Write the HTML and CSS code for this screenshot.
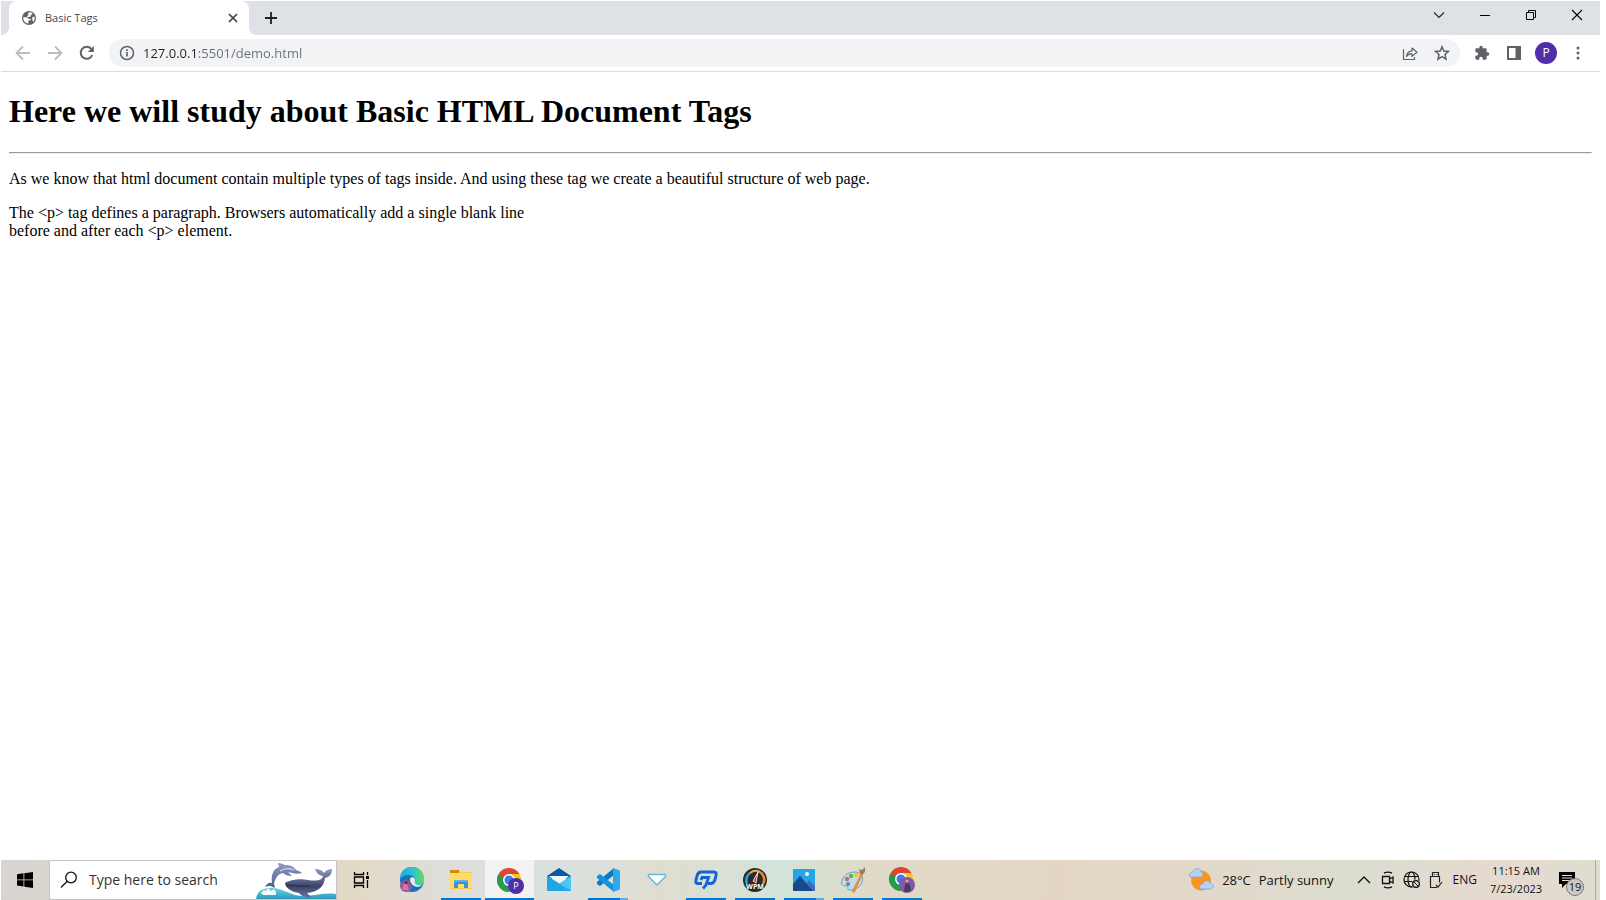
FILE: index.html
```html
<!DOCTYPE html>
<html lang="en">
<head>
<meta charset="utf-8">
<title>Basic Tags</title>
<link rel="stylesheet" href="styles.css">
</head>
<body>
<div class="desktop">
  <header class="tabstrip">
    <div class="tab">
      <svg class="favicon" width="14" height="14" viewBox="0 0 14 14"><circle cx="7" cy="7" r="7" fill="#5f6368"/><path d="M1.200 6.300L4.500 6.300C6 6.300 6 8 7.500 8h1.300v1.300H7.200c-.6 0-.8.300-.8 1v2.200C3.500 12.500 1 9.800 1.200 6.300zM7 1.300c1.500-.1 2.800.4 3.700 1.200-.3.900-1 1.300-2 1.300v1.300c0 .6-.5.900-1.200.9H5.200V4.700h1V3c0-.9.200-1.400.8-1.700zM10.300 6l2.400-.3c.3 1.900-.3 3.800-1.500 5L10.300 9z" fill="#fff"/></svg>
      <span class="tab-title">Basic Tags</span>
      <button class="tab-close" aria-label="Close tab"><svg width="10" height="10" viewBox="0 0 10 10"><path d="M1 1l8 8M9 1l-8 8" stroke="#3c4043" stroke-width="1.7"/></svg></button>
    </div>
    <button class="new-tab" aria-label="New tab"><svg width="14" height="14" viewBox="0 0 14 14"><path d="M7 1v12M1 7h12" stroke="#202124" stroke-width="1.8"/></svg></button>
    <div class="window-controls">
      <button aria-label="Search tabs"><svg width="12" height="12" viewBox="0 0 12 12"><path d="M1 3.500l5 5 5-5" fill="none" stroke="#222" stroke-width="1.100"/></svg></button>
      <button aria-label="Minimize"><svg width="12" height="12" viewBox="0 0 12 12"><path d="M1 6.500h10" stroke="#000"/></svg></button>
      <button aria-label="Restore"><svg width="12" height="12" viewBox="0 0 12 12"><path d="M1.500 3.500h7v7h-7zM3.500 3.500v-2h7v7h-2" fill="none" stroke="#000"/></svg></button>
      <button aria-label="Close"><svg width="12" height="12" viewBox="0 0 12 12"><path d="M1 1l10 10M11 1L1 11" stroke="#000" stroke-width="1.100"/></svg></button>
    </div>
  </header>

  <nav class="toolbar">
    <button class="nav-button" aria-label="Back"><svg width="16" height="16" viewBox="0 0 16 16"><path d="M15 8H2M8 1.500L1.500 8 8 14.500" fill="none" stroke="#babcbe" stroke-width="1.800"/></svg></button>
    <button class="nav-button" aria-label="Forward"><svg width="16" height="16" viewBox="0 0 16 16"><path d="M1 8h13M8 1.500L14.500 8 8 14.500" fill="none" stroke="#babcbe" stroke-width="1.800"/></svg></button>
    <button class="nav-button" aria-label="Reload"><svg width="16" height="16" viewBox="0 0 16 16"><path d="M13.300 10A6 6 0 1 1 12.300 3.900" fill="none" stroke="#5f6368" stroke-width="2"/><path d="M14.800 1v6h-6z" fill="#5f6368"/></svg></button>
    <div class="omnibox">
      <button aria-label="Site information"><svg width="16" height="16" viewBox="0 0 16 16"><circle cx="8" cy="8" r="6.500" fill="none" stroke="#5f6368" stroke-width="1.500"/><path d="M8 7v4.500M8 4.200v1.700" stroke="#5f6368" stroke-width="1.700"/></svg></button>
      <input class="address" type="text" aria-label="Address" value="127.0.0.1:5501/demo.html" spellcheck="false">
      <button aria-label="Share"><svg width="18" height="16" viewBox="0 0 18 16"><path d="M2.500 4v10.500h11V12M5.500 11.500c.4-3.500 2.200-5.500 5.500-5.700V3l5 4.200-5 4.200V8.700c-2.700 0-4.200.8-5.500 2.800z" fill="none" stroke="#5f6368" stroke-width="1.200" stroke-linejoin="round"/></svg></button>
      <button aria-label="Bookmark this tab"><svg width="16" height="16" viewBox="0 0 16 16"><path d="M8 1.800l1.800 4.200 4.700.4-3.500 3.100 1 4.600L8 11.700l-4 2.400 1-4.600L1.500 6.400 6.200 6z" fill="none" stroke="#5f6368" stroke-width="1.500"/></svg></button>
    </div>
    <button class="nav-button" aria-label="Extensions"><svg width="16" height="16" viewBox="0 0 24 24"><path d="M20.500 11H19V7a2 2 0 0 0-2-2h-4V3.500a2.500 2.500 0 0 0-5 0V5H4a2 2 0 0 0-2 2v3.800h1.500a2.700 2.700 0 0 1 0 5.400H2V20a2 2 0 0 0 2 2h3.800v-1.500a2.700 2.700 0 0 1 5.400 0V22H17a2 2 0 0 0 2-2v-4h1.500a2.500 2.500 0 0 0 0-5z" fill="#5f6368"/></svg></button>
    <button class="nav-button" aria-label="Side panel"><svg width="14" height="14" viewBox="0 0 14 14"><path d="M0 0h14v14H0zM2 2v10h6.500V2z" fill="#5f6368" fill-rule="evenodd"/></svg></button>
    <button class="nav-button" aria-label="Profile"><span class="avatar">P</span></button>
    <button class="nav-button" aria-label="Menu"><svg width="4" height="14" viewBox="0 0 4 14"><g fill="#5f6368"><circle cx="2" cy="2" r="1.500"/><circle cx="2" cy="7" r="1.500"/><circle cx="2" cy="12" r="1.500"/></g></svg></button>
  </nav>

  <main class="page">
    <h1>Here we will study about Basic HTML Document Tags</h1>
    <hr>
    <p>As we know that html document contain multiple types of tags inside. And using these tag we create a beautiful structure of web page.</p>
    <p>The &lt;p&gt; tag defines a paragraph. Browsers automatically add a single blank line<br>before and after each &lt;p&gt; element.</p>
  </main>

  <footer class="taskbar">
    <button class="start" aria-label="Start"><svg width="16" height="16" viewBox="0 0 16 16"><path d="M0 2.200l6.500-.9v6.200H0zM7.300 1.200L16 0v7.500H7.300zM0 8.300h6.500v6.200L0 13.600zM7.300 8.300H16V16l-8.700-1.300z"/></svg></button>
    <div class="search">
      <svg width="18" height="18" viewBox="0 0 18 18"><circle cx="11" cy="6.500" r="5.300" fill="none" stroke="#111" stroke-width="1.300"/><path d="M7.200 10.300L1 16.500" stroke="#111" stroke-width="1.300"/></svg>
      <input class="search-input" type="text" aria-label="Search" placeholder="Type here to search">
      <svg class="dolphins" width="80" height="36" viewBox="0 0 80 36">
        <defs>
          <linearGradient id="skin" x1="0" y1="0" x2="0" y2="1"><stop offset="0" stop-color="#8d9cc6"/><stop offset="1" stop-color="#545a86"/></linearGradient>
          <linearGradient id="whale" x1="0" y1="0" x2="0" y2="1"><stop offset="0" stop-color="#8d9bc2"/><stop offset=".6" stop-color="#3e4469"/><stop offset="1" stop-color="#6876a4"/></linearGradient>
          <linearGradient id="sea" x1="0" y1="0" x2="0" y2="1"><stop offset="0" stop-color="#70d1dc"/><stop offset="1" stop-color="#289bbd"/></linearGradient>
        </defs>
        <path d="M0 36c1-7 5-10 12-11 10-1 17 4 27 7 14 3 26-3 41-1v5z" fill="url(#sea)"/>
        <path d="M9 24c2-4 4-5 7-4-1-8 1-14 7-16L22 0c3 0 5 1 7 2 6 0 9 2 11 5 3 1 5 2 6 3-3 1-7 1-10 0l-4-1 4 4c-4 0-7-1-9-3-5 1-8 5-9 11 1 2 1 3 0 4-3-3-6-2-9-1z" fill="url(#skin)"/>
        <path d="M24 8c4-3 9-3 14-1" fill="none" stroke="#ccd5e8" stroke-width="1.200"/>
        <path d="M29 20c4-3 15-5 23-3 8 1 14 1 15-4-5-1-7-4-8-7 4 0 7 1 9 4 2-3 5-4 8-4 0 6-3 8-7 9-1 10-9 14-18 15l5 5c-6 0-11-2-13-5-7-1-14-5-14-10z" fill="url(#whale)"/>
        <path d="M30 22c8 0 14 2 24 1" fill="none" stroke="#242943"/>
        <path d="M5 30l3-3 2 1 2-3 3 3 3-2 2 3v3H7z" fill="#effcff"/>
      </svg>
    </div>
    <div class="apps">
      <button class="app task-view" aria-label="Task View"><svg width="17" height="16" viewBox="0 0 17 16"><path d="M1.500 0v2.500h9V0M1.500 5h9v6h-9zM1.500 16v-2.500h9V16M14.500 0v16" fill="none" stroke="#000" stroke-width="1.300"/><path d="M12 3h5v5h-5z" fill="#dfd6c3"/><path d="M13 4h3v3h-3z"/></svg></button>
      <button class="app" aria-label="Edge"><svg width="26" height="26" viewBox="0 0 26 26"><defs><linearGradient id="wave"><stop stop-color="#20a8e0"/><stop offset=".55" stop-color="#2dc5cf"/><stop offset="1" stop-color="#68da55"/></linearGradient></defs><circle cx="13" cy="13" r="12" fill="#1673bb"/><path d="M1 12A12 12 0 0 1 25 11c1 5-2 8-6 8-5 0-4-3-3-5C17 7 5 6 1 12z" fill="url(#wave)"/><path d="M11 12c1-3 5-2 5 1-1 4 1 6 7 5-4 4-12 1-12-6z" fill="#e6eeee"/><circle cx="7" cy="19" r="6" fill="#8e589a"/><path d="M3 23c1-8 4-8 5-6l2 6" fill="#db719d"/><circle cx="7" cy="15.500" r="1.500" fill="#463467"/></svg></button>
      <button class="app running" aria-label="File Explorer"><svg width="24" height="24" viewBox="0 0 24 24"><path d="M1 4V2h9l2 2h11v17H1z" fill="#ffc83a"/><path d="M1 5V2h9v3z" fill="#d58b00"/><path d="M1 5h22v15H1z" fill="#ffdb69"/><path d="M5 12h14v8h-4v-4H9v4H5z" fill="#3595db"/><path d="M5 12h14v2H5z" fill="#6aaedb"/></svg></button>
      <button class="app running active" aria-label="Chrome"><svg width="26" height="26" viewBox="0 0 26 26"><circle cx="12" cy="13" r="12" fill="#fbc519"/><path d="M12 13L1.600 7A12 12 0 0 0 12 25l5-9z" fill="#259b4b"/><path d="M1.600 7A12 12 0 0 1 22.400 7H12L8 12z" fill="#df443a"/><circle cx="12" cy="13" r="6" fill="#fff"/><circle cx="12" cy="13" r="4.500" fill="#3a7eeb"/></svg><span class="badge">P</span></button>
      <button class="app" aria-label="Mail"><svg width="24" height="24" viewBox="0 0 24 24"><path d="M0 8l12-8 12 8v3H0z" fill="#075aa5"/><path d="M2 8h20l-10 9z" fill="#f3f5f7"/><path d="M0 8l24 15H0z" fill="#20b0e8"/><path d="M24 8v15H4l9-8z" fill="#4bc8f2"/><path d="M0 8l24 15H0z" fill="#1fa6e6"/></svg></button>
      <button class="app running grouped" aria-label="Visual Studio Code"><svg width="24" height="24" viewBox="0 0 24 24"><path d="M18 0v7L4 18l-3-2v-2z" fill="#087ac3"/><path d="M18 24v-7L4 6 1 8v2z" fill="#1592dc"/><path d="M17 0l7 2.500v19L17 24z" fill="#30a8ee"/></svg></button>
      <button class="app" aria-label="Downloads"><svg width="20" height="14" viewBox="0 0 20 14"><path d="M1.500 1.500h17v2L10 12 1.500 3.500z" fill="#fff" stroke="#62b9db" stroke-width="1.500" stroke-linejoin="round"/></svg></button>
      <button class="app running" aria-label="PaintJet"><svg width="24" height="20" viewBox="0 0 24 20"><path d="M8 13.500H4c-2 0-2.500-1-2-3.500l1-4c.7-3 2-4 4-4h13c2 0 2.500 1 2 3.500l-1 4c-.7 3-2 4-4 4h-3" fill="none" stroke="#1264d4" stroke-width="3"/><path d="M7 10l1-2.500h6.500L12 15l-3 3.500" fill="none" stroke="#1264d4" stroke-width="2.800"/></svg></button>
      <button class="app running" aria-label="WPM"><svg width="26" height="26" viewBox="0 0 26 26"><circle cx="13" cy="13" r="12" fill="#292a2c"/><path d="M5 17A9 9 0 0 1 8 6" fill="none" stroke="#24a7e5" stroke-width="2.500"/><path d="M8 6a9 9 0 0 1 10-1" fill="none" stroke="#e8b04a" stroke-width="2"/><path d="M18 5a9 9 0 0 1 3 12" fill="none" stroke="#f18725" stroke-width="2.500"/><path d="M16 5l-2 11-3-2z" fill="#f23831" stroke="#fff" stroke-width=".8"/><text x="13" y="22" class="wpm" text-anchor="middle">WPM</text></svg></button>
      <button class="app running grouped" aria-label="Photos"><svg width="22" height="22" viewBox="0 0 22 22"><path d="M0 0h22v22H0z" fill="#24a5e8"/><path d="M10 19l6-8 6 6v5H10z" fill="#4967bd"/><path d="M0 15l7-8 13 15H0z" fill="#174a89"/><circle cx="14" cy="5" r="2" fill="#fff"/></svg></button>
      <button class="app running" aria-label="Paint"><svg width="26" height="26" viewBox="0 0 26 26"><path d="M2 14C3 8 9 5 15 5c6 0 9 5 7 10-1 5-7 8-13 8-2 0 0-4-3-4-4 0-5-2-4-5z" fill="#c1ddec" stroke="#6ba1bd"/><circle cx="7" cy="12" r="2.200" fill="#e66045"/><circle cx="11" cy="9" r="2.200" fill="#5db757"/><circle cx="16" cy="8" r="2.200" fill="#efc633"/><circle cx="8" cy="17" r="2" fill="#5487c5"/><path d="M21 6l2 1-8 18-3 1 1-4z" fill="#e98b32"/><path d="M20 6l-1-4 3 1 3-3v5l-3 3z" fill="#a47654"/></svg></button>
      <button class="app running" aria-label="Chrome, second profile"><svg width="28" height="28" viewBox="0 0 28 28"><circle cx="13" cy="13" r="12" fill="#fbc519"/><path d="M2.600 7A12 12 0 0 0 13 25l5-9-5-3z" fill="#259b4b"/><path d="M2.600 7A12 12 0 0 1 23.400 7H13L9 12z" fill="#df443a"/><circle cx="13" cy="13" r="6" fill="#fff"/><circle cx="13" cy="13" r="4.500" fill="#3a7eeb"/><circle cx="19" cy="19" r="8" fill="#83589f"/><path d="M16 26l1-7 2-3 3 3 1 6" fill="#4a3a6b"/><circle cx="19" cy="15" r="1.500" fill="#e5a5a8"/></svg></button>
    </div>
    <div class="tray">
      <button class="weather"><svg width="26" height="24" viewBox="0 0 26 24"><circle cx="13" cy="12.500" r="10" fill="#f9941f"/><path d="M2 9C0 6 3 4 5 4c1-5 8-4 8 0 3 1 2 5 0 5zM13 21c-3-2-1-5 2-5 0-4 6-4 7-1 4 0 4 6 1 6z" fill="#b7d0f4" stroke="#7da8df" stroke-width=".8"/></svg><span>28°C</span><span>Partly sunny</span></button>
      <button class="tray-icon" aria-label="Show hidden icons"><svg width="14" height="14" viewBox="0 0 14 14"><path d="M1 10l6-6 6 6" fill="none" stroke="#111" stroke-width="1.400"/></svg></button>
      <button class="tray-icon" aria-label="Meet Now"><svg width="14" height="18" viewBox="0 0 14 18"><path d="M3 2.200q4-2 8 0M3 15.800q4 2 8 0M1.500 5.500h7v7h-7zM8.500 8l3.500-2v6l-3.500-2" fill="none" stroke="#111" stroke-width="1.300"/></svg></button>
      <button class="tray-icon" aria-label="Network"><svg width="18" height="18" viewBox="0 0 18 18"><g fill="none" stroke="#111" stroke-width="1.200"><circle cx="8.500" cy="8.500" r="7.500"/><ellipse cx="8.500" cy="8.500" rx="3.500" ry="7.500"/><path d="M2 5.500h13M1 10.500h10"/></g><circle cx="13" cy="13" r="4.500" fill="#dcd8cc"/><circle cx="13" cy="13" r="3.300" fill="none" stroke="#111" stroke-width="1.300"/><path d="M10.800 10.800l4.400 4.400" stroke="#111"/></svg></button>
      <button class="tray-icon" aria-label="Safely remove hardware"><svg width="14" height="18" viewBox="0 0 14 18"><path d="M3.500 5.500v-4h6v4M8 16.500H1.500v-11h9v6M5 3.500h1M7.500 3.500h1M7 14l2 2 4-5" fill="none" stroke="#222" stroke-width="1.200"/></svg></button>
      <button class="language">ENG</button>
      <button class="clock"><span>11:15 AM</span><span>7/23/2023</span></button>
      <button class="notifications" aria-label="Notifications"><svg width="16" height="16" viewBox="0 0 16 16"><path d="M0 0h16v12H7l-4 4v-4H0z"/><path d="M3 3.500h10M3 6h10M3 8.500h8" stroke="#e6dbcf"/></svg><span class="count">19</span></button>
      <button class="show-desktop" aria-label="Show desktop"></button>
    </div>
  </footer>
</div>
</body>
</html>
```

FILE: styles.css
```css
* { box-sizing: border-box; }
body { margin: 0; background: #fff; font-family: "Open Sans", "Noto Sans", sans-serif; }
button { border: 0; padding: 0; margin: 0; background: none; font: inherit; color: inherit; display: flex; align-items: center; justify-content: center; }
input { border: 0; padding: 0; margin: 0; background: none; font: inherit; outline: 0; min-width: 0; }
svg { display: block; flex: none; }
.desktop { min-height: 100vh; padding: 1px 6px 0 1px; display: flex; flex-direction: column; }

.tabstrip { height: 34px; background: #dee1e6; display: flex; align-items: center; padding-left: 8px; }
.tab { position: relative; width: 240px; height: 34px; background: #fff; border-radius: 8px 8px 0 0; display: flex; align-items: center; padding: 0 11px 0 13px; }
.tab::before, .tab::after { content: ""; position: absolute; bottom: 0; width: 8px; height: 8px; }
.tab::before { left: -8px; background: radial-gradient(circle at 0 0, transparent 8px, #fff 8px); }
.tab::after { right: -8px; background: radial-gradient(circle at 100% 0, transparent 8px, #fff 8px); }
.tab-title { flex: 1; margin-left: 9px; font-size: 11px; line-height: 16px; color: #45494d; }
.new-tab { width: 28px; height: 28px; margin-left: 8px; }
.window-controls { margin-left: auto; display: flex; align-self: flex-start; }
.window-controls button { width: 46px; height: 28px; }

.toolbar { height: 37px; border-bottom: 1px solid #dadce0; display: flex; align-items: center; padding: 0 6px; }
.nav-button { width: 32px; height: 28px; flex: none; }
.omnibox { flex: 1; height: 28px; margin: 0 6px; padding: 0 10px; background: #f1f3f4; border-radius: 14px; display: flex; align-items: center; gap: 15px; }
.address { flex: 1; height: 20px; margin-left: -7px; font-size: 13px; line-height: 20px; color: #5f6368; background: linear-gradient(90deg, #202124 55px, #6b6f73 55px); -webkit-background-clip: text; background-clip: text; -webkit-text-fill-color: transparent; }
.avatar { width: 22px; height: 22px; border-radius: 50%; background: #512da8; color: #fff; font-size: 12px; line-height: 22px; text-align: center; }

.page { flex: 1; padding: 0 8px; font-family: "Liberation Serif", "Times New Roman", serif; font-size: 16px; color: #000; }
.page h1 { margin: 21px 0 22px; font-size: 32px; line-height: 37px; }
.page hr { margin: 8px 0; }
.page p { margin: 16px 0; line-height: 18px; }

.taskbar { height: 40px; display: flex; background: linear-gradient(90deg, #d9d4d0 0, #e2dac5 22%, #dedddb 28%, #d9e1df 35%, #e0ddd0 41%, #d2e3d9 49%, #e0dac8 54%, #e3d7c4 66%, #e3d8c8 74%, #dcddd1 84%, #e6dacf 94%, #dfddd0 100%); color: #111; }
.start { width: 48px; flex: none; }
.search { width: 288px; flex: none; display: flex; align-items: center; background: #fff; border: 1px solid #c5c5c5; padding-left: 10px; gap: 11px; }
.search-input { flex: 1; font-size: 14px; line-height: 20px; }
.search-input::placeholder { color: #333; opacity: 1; }
.dolphins { align-self: flex-end; }
.apps { display: flex; }
.app { position: relative; width: 49px; height: 40px; }
.task-view { margin-right: 1px; }
.running::after { content: ""; position: absolute; left: 5px; right: 4px; bottom: 0; height: 2px; background: #0078d7; }
.grouped::after { background: linear-gradient(90deg, #0078d7 80%, #66ade8 80%); }
.active { background: #f1f2f1; }
.active::after { left: 0; right: 0; }
.badge { position: absolute; left: 23px; top: 18px; width: 16px; height: 16px; border-radius: 50%; background: #512da8; color: #fff; font-size: 9px; line-height: 16px; text-align: center; }
.wpm { font: bold 7px "Open Sans", sans-serif; fill: #fff; }

.tray { margin-left: auto; display: flex; font-size: 13px; line-height: 18px; white-space: nowrap; }
.weather { gap: 8px; margin-right: 18px; }
.tray-icon { width: 24px; }
.language { font-size: 12px; margin-left: 5px; }
.clock { flex-direction: column; width: 54px; margin: 0 16px 0 12px; font-size: 11px; }
.notifications { position: relative; width: 16px; margin-right: 20px; }
.count { position: absolute; left: 7px; top: 18px; width: 18px; height: 18px; border: 1px solid #777; border-radius: 50%; background: #cdcac4; font-size: 11px; line-height: 16px; text-align: center; }
.show-desktop { width: 5px; border-left: 1px solid #aaa; }
```
